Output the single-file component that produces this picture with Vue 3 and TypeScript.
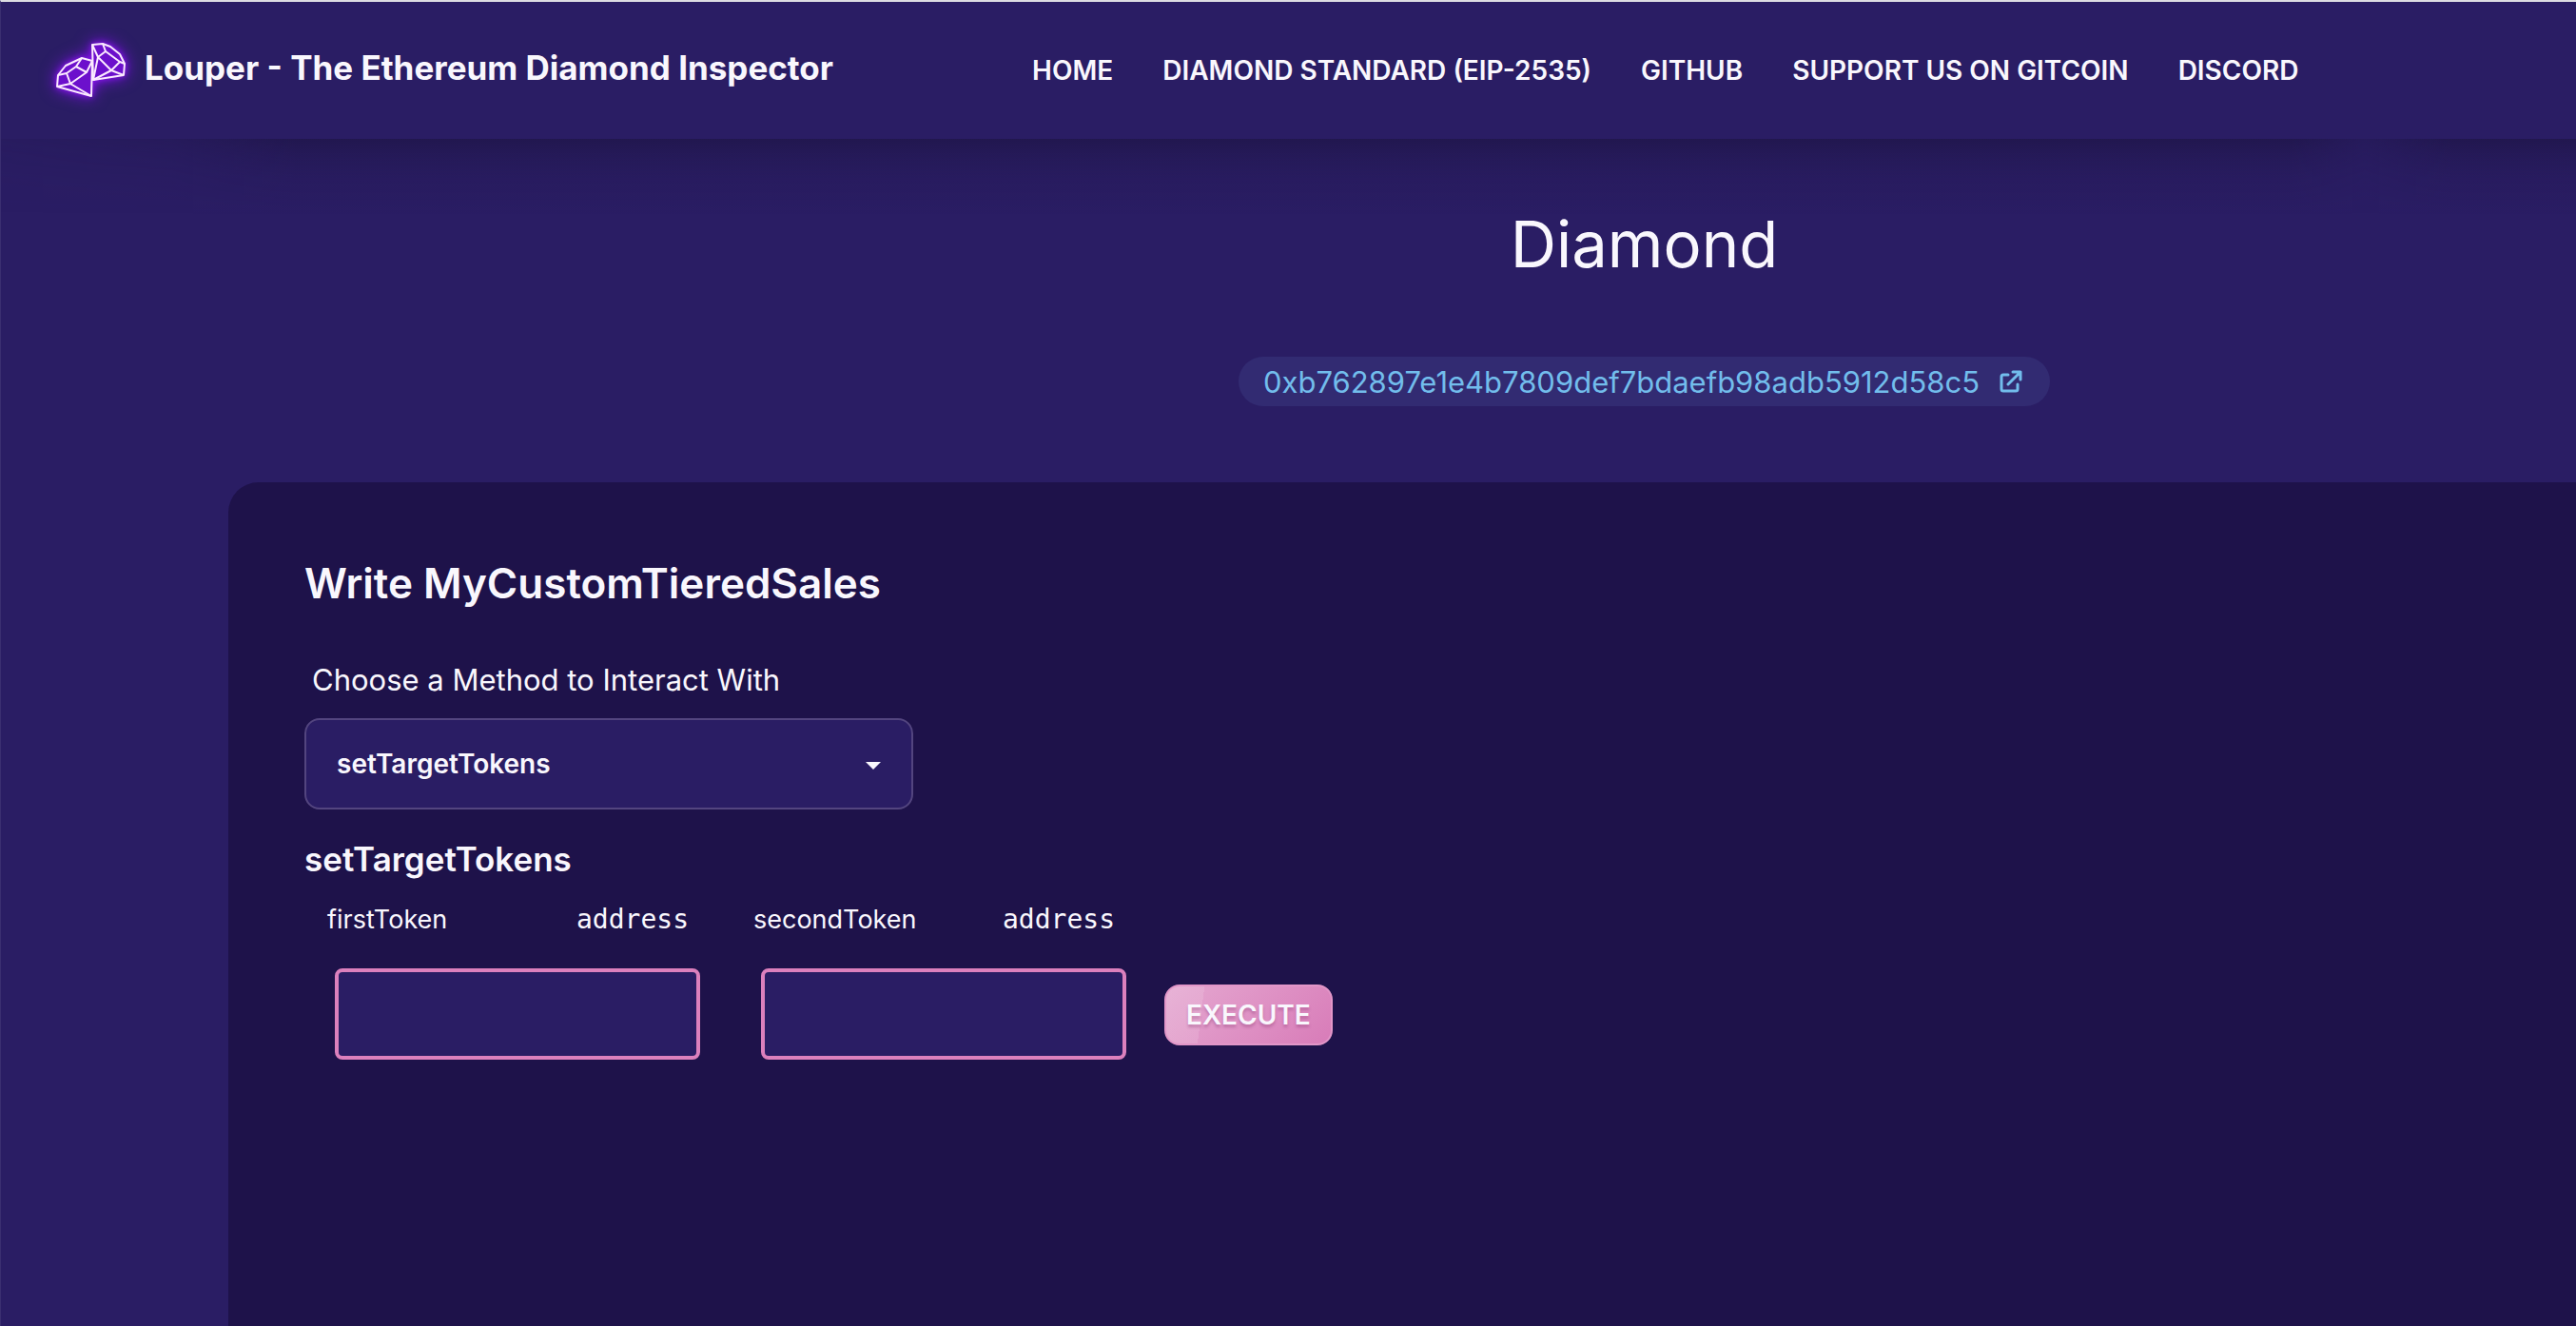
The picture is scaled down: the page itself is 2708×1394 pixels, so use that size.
<script setup lang="ts">
import { ref } from 'vue'

interface NavLink {
  label: string
  href: string
}

interface MethodInput {
  name: string
  type: string
  value: string
}

const address = '0xb762897e1e4b7809def7bdaefb98adb5912d58c5'

const links: NavLink[] = [
  { label: 'Home', href: '#home' },
  { label: 'Diamond Standard (EIP-2535)', href: '#eip-2535' },
  { label: 'GitHub', href: '#github' },
  { label: 'Support us on Gitcoin', href: '#gitcoin' },
  { label: 'Discord', href: '#discord' },
]

const methods: string[] = ['setTargetTokens']
const selected = ref<string>('setTargetTokens')

const inputs = ref<MethodInput[]>([
  { name: 'firstToken', type: 'address', value: '' },
  { name: 'secondToken', type: 'address', value: '' },
])
</script>

<template>
  <div class="page">
    <header class="navbar">
      <a class="brand" href="#home">
        <svg class="logo" viewBox="0 0 110 90" fill="none" aria-hidden="true">
          <g class="gem" stroke-linejoin="round">
            <path class="body" d="M57 18 L68 17 L76 20 L86 28 L91 38 L90 50 L58 55 Z" />
            <path d="M57 18 L63 31 L58 55 M63 31 L71 25 L68 17 M71 25 L86 36 L91 38 M86 36 L77 45 L63 31 M77 45 L90 50 M77 45 L58 55" />
            <path class="body" d="M46 32 L57 35 L56 72 L20 62 L21 50 L29 40 Z" />
            <path d="M46 32 L40 41 L30 48 L21 50 M40 41 L51 47 L57 35 M30 48 L34 59 L20 62 M34 59 L51 47 M34 59 L56 72" />
          </g>
        </svg>
        <span class="title">Louper - The Ethereum Diamond Inspector</span>
      </a>
      <nav class="links">
        <a v-for="link in links" :key="link.label" :href="link.href">{{ link.label }}</a>
      </nav>
    </header>

    <main class="content">
      <section class="intro">
        <h1>Diamond</h1>
        <a class="address" :href="'#' + address">
          <span>{{ address }}</span>
          <svg viewBox="0 0 24 24" fill="none" stroke="currentColor" stroke-width="3" stroke-linecap="round" stroke-linejoin="round" aria-hidden="true">
            <path d="M9 5H4a2 2 0 0 0-2 2v13a2 2 0 0 0 2 2h13a2 2 0 0 0 2-2v-5M14 2h8v8M22 2L9 15" />
          </svg>
        </a>
      </section>

      <section class="card">
        <h2>Write MyCustomTieredSales</h2>
        <label class="choose" for="method">Choose a Method to Interact With</label>
        <div class="select">
          <select id="method" v-model="selected">
            <option v-for="method in methods" :key="method" :value="method">{{ method }}</option>
          </select>
          <svg class="caret" viewBox="0 0 16 8" aria-hidden="true"><path d="M0 0h16l-8 8z" fill="currentColor" /></svg>
        </div>

        <h3>{{ selected }}</h3>
        <form class="fields" @submit.prevent>
          <div v-for="input in inputs" :key="input.name" class="field">
            <label :for="input.name">
              <span>{{ input.name }}</span>
              <code>{{ input.type }}</code>
            </label>
            <input :id="input.name" v-model="input.value" type="text" />
          </div>
          <button type="submit">Execute</button>
        </form>
      </section>
    </main>
  </div>
</template>

<style>
body {
  margin: 0;
  background: #2a1d64;
}
</style>

<style scoped>
.page {
  box-sizing: border-box;
  display: flex;
  flex-direction: column;
  min-height: 100vh;
  overflow: hidden;
  border-top: 2px solid #dcdce2;
  border-left: 1px solid #3a2e70;
  background: #2a1d64;
  color: #f9f7fd;
  font-family: Inter, 'Liberation Sans', sans-serif;
}

a {
  color: inherit;
  text-decoration: none;
}

.navbar {
  position: relative;
  display: flex;
  align-items: center;
  height: 144px;
  padding-left: 39px;
}

/* Shadow under the bar, with the lighter patches near both ends */
.navbar::after {
  content: '';
  position: absolute;
  top: 100%;
  left: 0;
  right: 0;
  height: 80px;
  background: linear-gradient(rgba(26, 18, 60, 0.52), rgba(26, 18, 60, 0.3) 20%, rgba(26, 18, 60, 0.12) 50%, transparent);
  mask-image: linear-gradient(90deg, rgba(0, 0, 0, 0.2), rgba(0, 0, 0, 0.4) 180px, #000 310px, #000 calc(100% - 300px), rgba(0, 0, 0, 0.4) calc(100% - 222px), #000 calc(100% - 130px));
  pointer-events: none;
}

.brand {
  display: flex;
  align-items: center;
  gap: 2px;
}

.logo {
  width: 110px;
  height: 90px;
}

.gem {
  stroke: #fbeaff;
  stroke-width: 2;
  filter: drop-shadow(0 0 3px #8a14f0) drop-shadow(0 0 8px #7a10e0);
}

.body {
  fill: #6c10cc;
}

.title {
  padding-bottom: 6px;
  font-size: 35px;
  font-weight: 700;
  line-height: 44px;
  white-space: nowrap;
}

.links {
  display: flex;
  gap: 52px;
  margin-left: 209px;
  font-size: 28px;
  font-weight: 600;
  line-height: 40px;
  text-transform: uppercase;
  white-space: nowrap;
}

.content {
  display: flex;
  flex: 1;
  flex-direction: column;
}

.intro {
  display: flex;
  flex-direction: column;
  align-items: center;
  padding: 71px 0 80px 748px;
}

h1,
h2,
h3 {
  margin: 0;
}

h1 {
  font-size: 67px;
  font-weight: 400;
  line-height: 80px;
}

.address {
  display: flex;
  align-items: center;
  gap: 21px;
  height: 52px;
  margin-top: 78px;
  padding: 0 29px 0 26px;
  border-radius: 26px;
  background: #322b72;
  color: #72bdec;
  font-size: 31px;
}

.address svg {
  width: 24px;
  height: 24px;
}

.card {
  flex: 1;
  margin-left: 239px;
  padding: 80px;
  border-top-left-radius: 32px;
  background: #1e124a;
}

h2 {
  font-size: 44px;
  font-weight: 600;
  line-height: 52px;
}

.choose {
  display: block;
  margin-top: 56px;
  padding-left: 8px;
  font-size: 31px;
  line-height: 40px;
}

.select {
  position: relative;
  width: 640px;
  margin-top: 20px;
}

select {
  box-sizing: border-box;
  width: 100%;
  height: 96px;
  padding: 0 32px;
  appearance: none;
  border: 2px solid #53457f;
  border-radius: 16px;
  background: #2a1d64;
  color: inherit;
  font: 600 28px Inter, 'Liberation Sans', sans-serif;
}

.caret {
  position: absolute;
  top: 46px;
  right: 34px;
  width: 16px;
  height: 8px;
  pointer-events: none;
}

h3 {
  margin-top: 30px;
  font-size: 35px;
  font-weight: 600;
  line-height: 44px;
}

.fields {
  display: flex;
  align-items: flex-end;
}

.field {
  width: 384px;
  margin: 17px 32px 0;
}

.field label {
  display: flex;
  align-items: center;
  justify-content: space-between;
  height: 48px;
  padding: 0 12px 0 0;
  margin-left: -8px;
  font-size: 27px;
}

code {
  font: 28px 'DejaVu Sans Mono', monospace;
}

input {
  box-sizing: border-box;
  display: block;
  width: 384px;
  height: 96px;
  margin-top: 28px;
  padding: 0 28px;
  border: 4px solid #dc80bd;
  border-radius: 8px;
  background: #2a1d64;
  color: inherit;
  font: 28px Inter, 'Liberation Sans', sans-serif;
}

button {
  height: 64px;
  margin: 0 0 15px 8px;
  padding: 0 21px;
  border: 2px solid #e296c8;
  border-radius: 16px;
  background:
    linear-gradient(97deg, rgba(255, 255, 255, 0.12) 23%, transparent 23%),
    linear-gradient(135deg, #e5a9d1, #d87bb8);
  background-origin: border-box;
  color: #f9f7fd;
  font: 600 28px Inter, 'Liberation Sans', sans-serif;
  text-shadow: 0 3px 3px rgba(120, 40, 100, 0.3);
  text-transform: uppercase;
}
</style>
